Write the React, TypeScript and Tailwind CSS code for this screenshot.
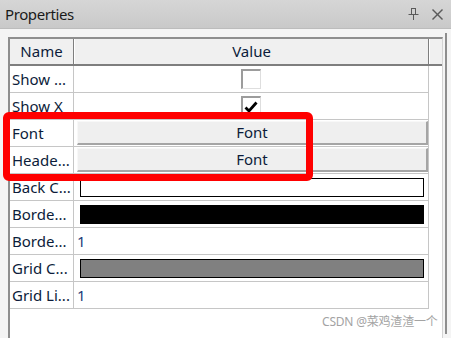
import React from "react";

type Row = {
  name: string;
  kind: "check" | "font" | "color" | "text";
  checked?: boolean;
  color?: string;
  text?: string;
};

const rows: Row[] = [
  { name: "Show ...", kind: "check", checked: false },
  { name: "Show X", kind: "check", checked: true },
  { name: "Font", kind: "font" },
  { name: "Heade...", kind: "font" },
  { name: "Back C...", kind: "color", color: "bg-white" },
  { name: "Borde...", kind: "color", color: "bg-black" },
  { name: "Borde...", kind: "text", text: "1" },
  { name: "Grid C...", kind: "color", color: "bg-[#808080]" },
  { name: "Grid Li...", kind: "text", text: "1" },
];

function PinIcon() {
  return (
    <svg width="11" height="12" viewBox="0 0 11 12" fill="none" stroke="#5a5a5a" strokeWidth="1">
      <rect x="3.5" y="0.5" width="4" height="6" />
      <line x1="0.5" y1="6.5" x2="10.5" y2="6.5" />
      <line x1="5.5" y1="6.5" x2="5.5" y2="12" />
    </svg>
  );
}

function CloseIcon() {
  return (
    <svg width="11" height="11" viewBox="0 0 11 11" stroke="#5a5a5a" strokeWidth="1.4">
      <line x1="0.5" y1="0.5" x2="10.5" y2="10.5" />
      <line x1="10.5" y1="0.5" x2="0.5" y2="10.5" />
    </svg>
  );
}

function CheckBox({ checked }: { checked?: boolean }) {
  return (
    <div className="w-[20px] h-[20px] bg-white border-t-2 border-l-2 border-[#9c9c9c] border-r border-b border-r-[#dedede] border-b-[#dedede] relative">
      {checked && (
        <svg className="absolute left-[1px] top-[3px]" width="14" height="12" viewBox="0 0 14 12">
          <path d="M1.5 6.5 L5 10 L12.5 1.5" fill="none" stroke="#000" strokeWidth="2.8" />
        </svg>
      )}
    </div>
  );
}

function ValueCell({ row }: { row: Row }) {
  if (row.kind === "check") {
    return (
      <div className="flex h-full items-center justify-center">
        <CheckBox checked={row.checked} />
      </div>
    );
  }
  if (row.kind === "font") {
    return (
      <div className="flex h-full items-center pl-[3px] py-[3px]">
        <div className="flex h-[24px] w-full items-center justify-center bg-[#efefef] border-t border-l border-[#f8f8f8] border-r-2 border-b-2 border-r-[#a5a5a5] border-b-[#a5a5a5] text-[15px] text-[#0c1c3a]">
          Font
        </div>
      </div>
    );
  }
  if (row.kind === "color") {
    return (
      <div className="flex h-full items-center pl-[6px] pr-[4px]">
        <div className={`h-[19px] w-full border border-black ${row.color}`} />
      </div>
    );
  }
  return (
    <div className="flex h-full items-center pl-[3px] text-[15px] text-[#1c3c78]">{row.text}</div>
  );
}

export default function App() {
  return (
    <div
      className="relative w-[451px] h-[338px] overflow-hidden bg-[#f4f4f4] flex flex-col"
      style={{ fontFamily: '"Noto Sans", "Noto Sans CJK SC", sans-serif' }}
    >
      <div className="h-[29px] shrink-0 flex items-center justify-between pl-[5px] pr-[8px] bg-gradient-to-b from-[#d6d6d6] to-[#c9c9c9] border-b border-[#bcbcbc]">
        <span className="text-[15px] text-[#1a1a1a] tracking-[-0.4px]">Properties</span>
        <div className="flex items-center gap-[13px]">
          <PinIcon />
          <CloseIcon />
        </div>
      </div>

      <div className="flex-1 flex pt-[8px] pl-[8px]">
        <div className="w-[435px] h-full flex flex-col bg-white border-t-2 border-l-2 border-[#8e8e8e] border-r border-r-[#d4d4d4]">
          <div className="flex h-[27px] shrink-0 bg-[#f0f0f0] border-b-2 border-[#7e7e7e] text-[15px] text-[#0c1c3a]">
            <div className="w-[64px] flex items-center justify-center border-r border-[#7e7e7e]">Name</div>
            <div className="w-[355px] flex items-center justify-center border-r border-[#7e7e7e] border-l border-l-white">
              Value
            </div>
            <div className="flex-1 border-l border-white" />
          </div>
          {rows.map((row, i) => (
            <div key={i} className="flex h-[27px] shrink-0">
              <div className="w-[64px] flex items-center pl-[2px] border-r border-b border-[#c6c6c6] text-[15px] text-[#0c1c3a] whitespace-nowrap overflow-hidden">
                {row.name}
              </div>
              <div className="w-[355px] border-r border-b border-[#c6c6c6]">
                <ValueCell row={row} />
              </div>
            </div>
          ))}
        </div>
        <div className="ml-[2px] w-[2px] h-full bg-[#8e8e8e] -mt-[4px]" />
      </div>

      <div className="absolute left-[3px] top-[112px] w-[310px] h-[69px] border-[7px] border-[#ff0000] rounded-[6px]" />

      <div className="absolute left-[322px] top-[313px] text-[12px] text-[#a3a3a3] whitespace-nowrap tracking-[-0.2px]">
        CSDN @菜鸡渣渣一个
      </div>
    </div>
  );
}
